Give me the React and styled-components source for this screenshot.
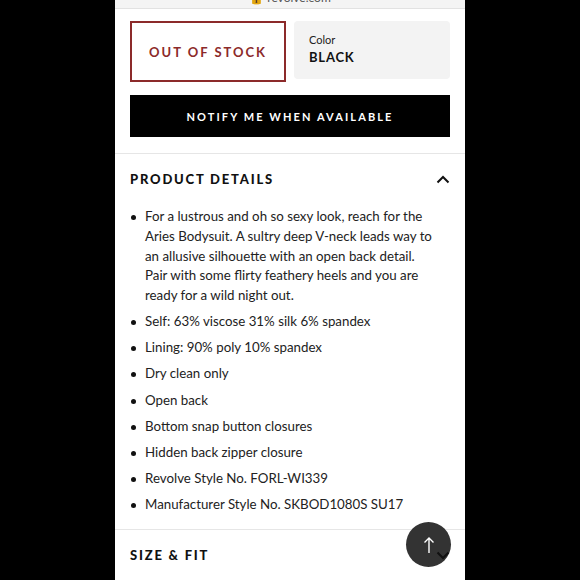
import React from "react";
import styled, { createGlobalStyle } from "styled-components";

const Global = createGlobalStyle`
  html, body {
    margin: 0;
    background: #000;
  }
  body {
    font-family: "Lato", "Liberation Sans", sans-serif;
  }
`;

const Page = styled.div`
  width: 350px;
  height: 580px;
  margin: 0 auto;
  background: #fff;
  overflow: hidden;
  position: relative;
`;

const UrlBar = styled.div`
  height: 8px;
  background: #f4f4f4;
  border-bottom: 1px solid #e2e2e2;
  overflow: hidden;
  text-align: center;
  span {
    display: block;
    margin-top: -9px;
    font-size: 12px;
    line-height: 14px;
    color: #555;
  }
`;

const TopRow = styled.div`
  display: flex;
  gap: 8px;
  align-items: flex-start;
  padding: 12px 15px 0;
`;

const StockBox = styled.div`
  width: 156px;
  height: 61px;
  box-sizing: border-box;
  border: 2px solid #8c2a2a;
  display: flex;
  align-items: center;
  justify-content: center;
  color: #8c2a2a;
  font-weight: 700;
  font-size: 13px;
  letter-spacing: 2px;
`;

const ColorBox = styled.div`
  width: 156px;
  height: 58px;
  box-sizing: border-box;
  background: #f3f3f3;
  border-radius: 4px;
  padding: 12px 15px;
  display: flex;
  flex-direction: column;
  gap: 3px;
`;

const ColorLabel = styled.div`
  font-size: 11px;
  color: #222;
`;

const ColorValue = styled.div`
  font-size: 13px;
  font-weight: 700;
  letter-spacing: 0.8px;
  color: #111;
`;

const Notify = styled.button`
  display: block;
  margin: 13px 15px 0;
  width: 320px;
  height: 42px;
  border: 0;
  background: #000;
  color: #fff;
  font-family: inherit;
  font-weight: 700;
  font-size: 11px;
  letter-spacing: 2.1px;
`;

const Section = styled.div`
  border-top: 1px solid #e6e6e6;
  margin-top: ${(p) => p.$mt || 0}px;
  padding: 0 15px;
`;

const SectionHead = styled.div`
  height: 52px;
  display: flex;
  align-items: center;
  justify-content: space-between;
  font-size: 13px;
  font-weight: 900;
  letter-spacing: 1.8px;
  color: #111;
  margin-top: -1px;
  svg {
    position: relative;
    z-index: 2;
  }
`;

const List = styled.ul`
  list-style: none;
  margin: 0;
  padding: 2px 14px 8px 0;
  font-size: 13.3px;
  color: #222;
  line-height: 19.8px;
`;

const Item = styled.li`
  position: relative;
  padding-left: 15px;
  margin-bottom: 6.3px;
  &::before {
    content: "";
    position: absolute;
    left: 1px;
    top: 8px;
    width: 5px;
    height: 5px;
    border-radius: 50%;
    background: #111;
  }
`;

const TopButton = styled.div`
  position: absolute;
  left: 291px;
  top: 522px;
  width: 45px;
  height: 45px;
  border-radius: 50%;
  background: #333;
  display: flex;
  align-items: center;
  justify-content: center;
  z-index: 1;
`;

const Chevron = ({ up }) => (
  <svg width="14" height="9" viewBox="0 0 14 9">
    <path
      d={up ? "M1.5 7.5 L7 2 L12.5 7.5" : "M1.5 1.5 L7 7 L12.5 1.5"}
      fill="none"
      stroke="#111"
      strokeWidth="2"
    />
  </svg>
);

const details = [
  "For a lustrous and oh so sexy look, reach for the Aries Bodysuit. A sultry deep V-neck leads way to an allusive silhouette with an open back detail. Pair with some flirty feathery heels and you are ready for a wild night out.",
  "Self: 63% viscose 31% silk 6% spandex",
  "Lining: 90% poly 10% spandex",
  "Dry clean only",
  "Open back",
  "Bottom snap button closures",
  "Hidden back zipper closure",
  "Revolve Style No. FORL-WI339",
  "Manufacturer Style No. SKBOD1080S SU17",
];

export default function App() {
  return (
    <>
      <Global />
      <Page>
        <UrlBar>
          <span>🔒 revolve.com</span>
        </UrlBar>
        <TopRow>
          <StockBox>OUT OF STOCK</StockBox>
          <ColorBox>
            <ColorLabel>Color</ColorLabel>
            <ColorValue>BLACK</ColorValue>
          </ColorBox>
        </TopRow>
        <Notify>NOTIFY ME WHEN AVAILABLE</Notify>
        <Section $mt={16}>
          <SectionHead>
            PRODUCT DETAILS
            <Chevron up />
          </SectionHead>
          <List>
            {details.map((d) => (
              <Item key={d}>{d}</Item>
            ))}
          </List>
        </Section>
        <Section>
          <SectionHead>
            SIZE &amp; FIT
            <Chevron />
          </SectionHead>
        </Section>
        <TopButton>
          <svg width="12" height="18" viewBox="0 0 12 18">
            <path d="M6 17 V2 M1.5 6.5 L6 2 L10.5 6.5" fill="none" stroke="#fff" strokeWidth="1.4" />
          </svg>
        </TopButton>
      </Page>
    </>
  );
}
